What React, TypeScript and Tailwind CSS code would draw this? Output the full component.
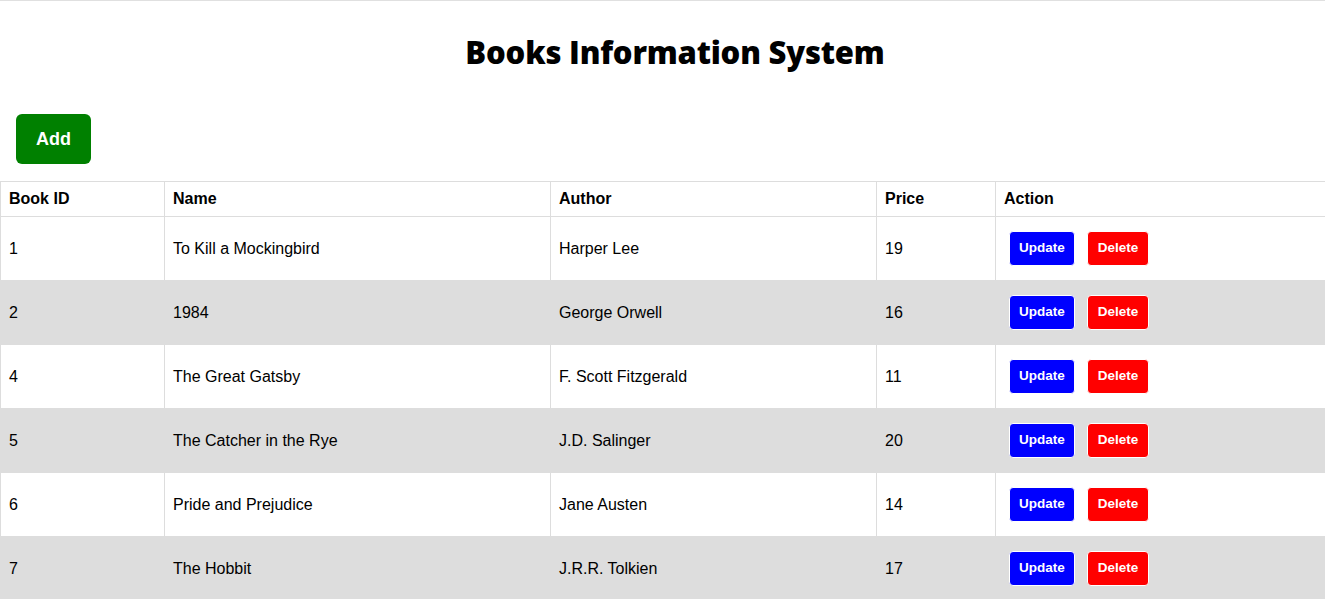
import React from "react";

interface Book {
  id: number;
  name: string;
  author: string;
  price: number;
}

const books: Book[] = [
  { id: 1, name: "To Kill a Mockingbird", author: "Harper Lee", price: 19 },
  { id: 2, name: "1984", author: "George Orwell", price: 16 },
  { id: 4, name: "The Great Gatsby", author: "F. Scott Fitzgerald", price: 11 },
  { id: 5, name: "The Catcher in the Rye", author: "J.D. Salinger", price: 20 },
  { id: 6, name: "Pride and Prejudice", author: "Jane Austen", price: 14 },
  { id: 7, name: "The Hobbit", author: "J.R.R. Tolkien", price: 17 },
];

export default function App() {
  return (
    <div className="min-h-screen bg-white border-t border-[#e0e0e0] font-['Liberation_Sans',Arial,sans-serif] text-black overflow-hidden">
      <h1 className="text-center text-[31px] font-extrabold font-['Open_Sans',sans-serif] mt-[29px] pl-[25px] leading-[44px] tracking-[-0.2px]">
        Books Information System
      </h1>
      <div className="px-4 mt-[40px] mb-[17px]">
        <button className="w-[75px] h-[50px] bg-[#008000] text-white text-lg font-bold rounded-md">
          Add
        </button>
      </div>
      <table className="table-fixed border-collapse w-[1326px] text-base">
        <colgroup>
          <col className="w-[164px]" />
          <col className="w-[386px]" />
          <col className="w-[326px]" />
          <col className="w-[119px]" />
          <col className="w-[331px]" />
        </colgroup>
        <thead>
          <tr className="h-[35px]">
            {["Book ID", "Name", "Author", "Price", "Action"].map((h) => (
              <th key={h} className="border border-[#dddddd] px-2 text-left font-bold">
                {h}
              </th>
            ))}
          </tr>
        </thead>
        <tbody>
          {books.map((b, i) => (
            <tr key={b.id} className={`h-[64px] ${i % 2 === 1 ? "bg-[#dddddd]" : "bg-white"}`}>
              <td className="border border-[#dddddd] px-2">{b.id}</td>
              <td className="border border-[#dddddd] px-2">{b.name}</td>
              <td className="border border-[#dddddd] px-2">{b.author}</td>
              <td className="border border-[#dddddd] px-2">{b.price}</td>
              <td className="border border-[#dddddd] px-2">
                <div className="flex items-center gap-3 ml-[5px]">
                  <button className="w-[66px] h-[35px] bg-[#0000ff] text-white text-[13.5px] font-bold rounded border border-white">
                    Update
                  </button>
                  <button className="w-[62px] h-[35px] bg-[#ff0000] text-white text-[13.5px] font-bold rounded border border-white">
                    Delete
                  </button>
                </div>
              </td>
            </tr>
          ))}
        </tbody>
      </table>
    </div>
  );
}
